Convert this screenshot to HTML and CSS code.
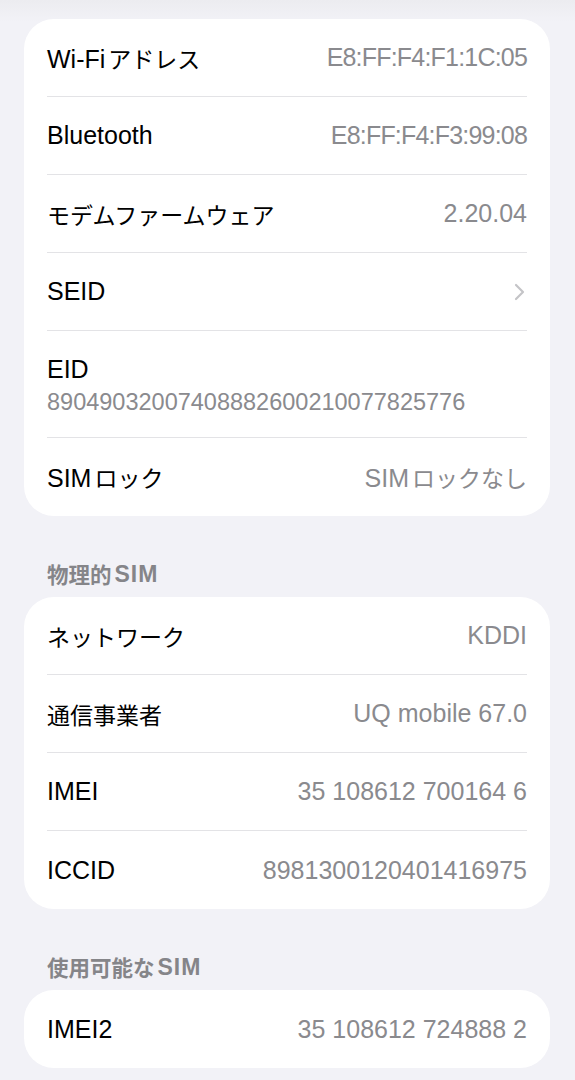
FILE: index.html
```html
<!DOCTYPE html>
<html lang="ja">
<head>
<meta charset="utf-8">
<link rel="stylesheet" href="styles.css">
</head>
<body>
<div class="page">
  <div class="card">
    <div class="row"><span class="label">Wi-Fi<span class="ja gap">アドレス</span></span><span class="value mac">E8:FF:F4:F1:1C:05</span></div>
    <div class="row"><span class="label">Bluetooth</span><span class="value mac">E8:FF:F4:F3:99:08</span></div>
    <div class="row"><span class="label"><span class="ja">モデムファームウェア</span></span><span class="value">2.20.04</span></div>
    <div class="row"><span class="label">SEID</span><svg class="chev" width="12" height="18" viewBox="0 0 12 18"><polyline points="2,2 9,9 2,16" fill="none" stroke="#c4c4c7" stroke-width="2.2" stroke-linecap="round" stroke-linejoin="round"/></svg></div>
    <div class="row stack"><span class="label">EID</span><span class="value long">89049032007408882600210077825776</span></div>
    <div class="row"><span class="label">SIM<span class="ja gap">ロック</span></span><span class="value">SIM<span class="ja gap">ロックなし</span></span></div>
  </div>

  <div class="header"><span class="ja">物理的</span><span class="latin">SIM</span></div>
  <div class="card">
    <div class="row"><span class="label"><span class="ja">ネットワーク</span></span><span class="value">KDDI</span></div>
    <div class="row"><span class="label"><span class="ja">通信事業者</span></span><span class="value">UQ mobile 67.0</span></div>
    <div class="row"><span class="label">IMEI</span><span class="value">35 108612 700164 6</span></div>
    <div class="row"><span class="label">ICCID</span><span class="value">8981300120401416975</span></div>
  </div>

  <div class="header"><span class="ja">使用可能な</span><span class="latin">SIM</span></div>
  <div class="card">
    <div class="row"><span class="label">IMEI2</span><span class="value">35 108612 724888 2</span></div>
  </div>
</div>
</body>
</html>
```

FILE: styles.css
```css
html, body {
  margin: 0;
  padding: 0;
  background: #f2f2f7;
}
body {
  font-family: "Liberation Sans", "Noto Sans CJK JP", sans-serif;
  color: #000;
  width: 575px;
  height: 1080px;
  overflow: hidden;
  background: linear-gradient(to bottom, #ececf0 0px, #f2f2f7 22px);
}
.page {
  padding: 19px 25px 0 24px;
}
.card {
  background: #fff;
  border-radius: 30px;
  padding: 0 23px;
}
.row {
  height: 77px;
  display: flex;
  align-items: center;
  justify-content: space-between;
  border-bottom: 1px solid #e3e3e6;
  font-size: 25px;
}
.row:last-child {
  border-bottom: none;
  height: 78px;
}
.row.stack {
  height: auto;
  flex-direction: column;
  align-items: flex-start;
  justify-content: flex-start;
  padding: 22px 0 18px;
}
.row.stack .label,
.row.stack .value {
  line-height: 33px;
}
.label {
  color: #000;
  white-space: nowrap;
}
.value {
  color: #8a8a8e;
  white-space: nowrap;
}
.value.mac {
  letter-spacing: -0.8px;
}
.ja {
  font-family: "Noto Sans CJK JP", sans-serif;
  font-size: 23px;
}
.gap {
  margin-left: 3px;
}
.value.long {
  font-size: 23.5px;
}
.chev {
  display: block;
  margin-right: 1px;
}
.header {
  display: flex;
  align-items: center;
  height: 24px;
  margin: 46px 0 11px 23px;
  font-size: 23px;
  line-height: 24px;
  font-weight: 600;
  color: #858589;
}
.header .ja {
  font-size: 21.5px;
  font-weight: 600;
}
.header .latin {
  margin-left: 3px;
  letter-spacing: 1px;
}
```
